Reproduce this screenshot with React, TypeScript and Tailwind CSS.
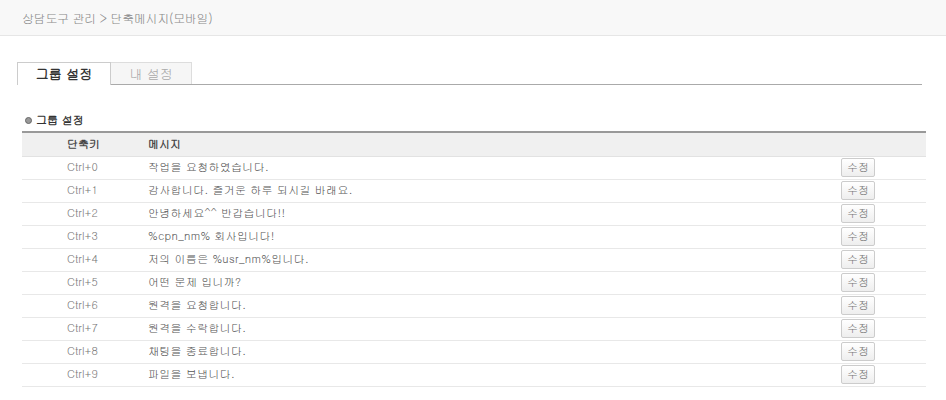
const FONT = "font-['Gulim','Noto_Sans_CJK_KR','Noto_Sans',sans-serif]";

// shortcut rows — key + message
const ROWS: { key: string; msg: string }[] = [
  { key: "Ctrl+0", msg: "작업을 요청하였습니다." },
  { key: "Ctrl+1", msg: "감사합니다. 즐거운 하루 되시길 바래요." },
  { key: "Ctrl+2", msg: "안녕하세요^^ 반갑습니다!!" },
  { key: "Ctrl+3", msg: "%cpn_nm% 회사입니다!" },
  { key: "Ctrl+4", msg: "저의 이름은 %usr_nm%입니다." },
  { key: "Ctrl+5", msg: "어떤 문제 입니까?" },
  { key: "Ctrl+6", msg: "원격을 요청합니다." },
  { key: "Ctrl+7", msg: "원격을 수락합니다." },
  { key: "Ctrl+8", msg: "채팅을 종료합니다." },
  { key: "Ctrl+9", msg: "파일을 보냅니다." },
];

export default function App() {
  return (
    <div className={`w-[946px] h-[400px] bg-white overflow-hidden ${FONT}`}>
      {/* Breadcrumb bar */}
      <div className="h-[36px] bg-[#f8f8f8] border-b border-[#e6e6e6] flex items-center pl-[22px]">
        <span className="text-[12px] text-[#888] tracking-[-0.3px]">
          상담도구 관리 &gt; 단축메시지(모바일)
        </span>
      </div>

      {/* Tabs */}
      <div className="mt-[26px] ml-[17px] mr-[24px] flex items-end border-b border-[#aaa]">
        <div className="w-[94px] h-[23px] bg-white border border-[#ccc] border-b-0 flex items-center justify-center text-[13px] font-bold text-[#333] -mb-px pb-px">
          그룹 설정
        </div>
        <div className="w-[81px] h-[22px] bg-[#f6f6f6] border border-[#ddd] border-b-0 border-l-0 flex items-center justify-center text-[13px] text-[#aaa]">
          내 설정
        </div>
      </div>

      {/* Section title */}
      <div className="mt-[27px] ml-[25px] flex items-center gap-[4px]">
        <span className="w-[7px] h-[7px] rounded-full bg-[#999] border border-[#666]" />
        <span className="text-[11px] font-bold text-[#333]">그룹 설정</span>
      </div>

      {/* Table */}
      <div className="mt-[2px] ml-[22px] mr-[20px] border-t-2 border-[#999]">
        <div className="h-[24px] bg-[#f0f0f0] border-b border-[#e2e2e2] flex items-center text-[11px] font-bold text-[#444]">
          <div className="w-[126px] pl-[45px]">단축키</div>
          <div className="flex-1">메시지</div>
        </div>
        {ROWS.map((row) => (
          <div
            key={row.key}
            className="h-[23px] border-b border-[#e8e8e8] flex items-center text-[11px]"
          >
            <div className="w-[126px] pl-[45px] text-[#777]">{row.key}</div>
            <div className="flex-1 text-[#555] tracking-[0.3px]">{row.msg}</div>
            <div className="w-[85px]">
              <button className="w-[34px] h-[19px] border border-[#ccc] rounded-[2px] bg-gradient-to-b from-white to-[#eee] text-[11px] text-[#777] flex items-center justify-center">
                수정
              </button>
            </div>
          </div>
        ))}
      </div>
    </div>
  );
}
